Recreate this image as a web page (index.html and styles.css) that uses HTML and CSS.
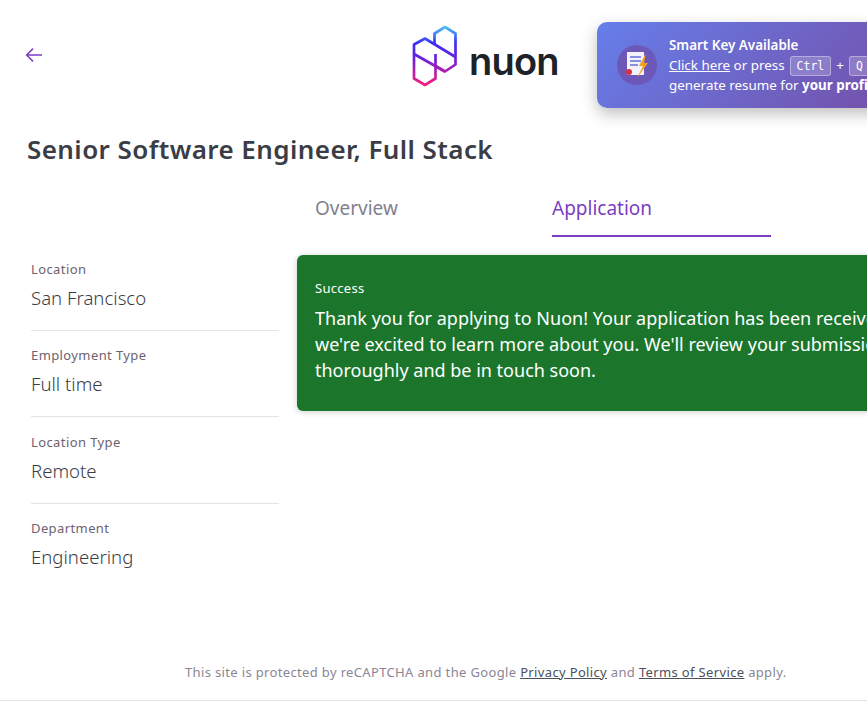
FILE: index.html
```html
<!DOCTYPE html>
<html lang="en">
<head>
<meta charset="utf-8">
<title>Senior Software Engineer, Full Stack</title>
<link rel="stylesheet" href="styles.css">
</head>
<body>
<div class="page">
  <header class="topbar">
    <a class="back" aria-label="Back">
      <svg width="18" height="18" viewBox="0 0 18 18" fill="none" stroke="#7b3fc4" stroke-width="1.5"><path d="M17 9H1.6M8 2.6L1.6 9L8 15.4"/></svg>
    </a>
    <div class="logo">
      <svg width="54" height="70" viewBox="0 0 54 70" fill="none" stroke="url(#lg)" stroke-width="2.7" stroke-linejoin="round">
        <defs>
          <linearGradient id="lg" gradientUnits="userSpaceOnUse" x1="0" y1="6" x2="0" y2="65">
            <stop offset="0" stop-color="#4fc8f5"/>
            <stop offset="0.28" stop-color="#3a30f5"/>
            <stop offset="0.55" stop-color="#6a1fdc"/>
            <stop offset="1" stop-color="#f5207f"/>
          </linearGradient>
        </defs>
        <path d="M26.5 24V13.500L37 7L47.500 13.500V44.500L37 51.500L26.500 45.500"/>
        <path d="M47.500 37L17 18.500L6 24.500V58.500L17 65L27.500 58.500V34"/>
        <path d="M6 34L37 51.500"/>
      </svg>
      <span class="wordmark">nuon</span>
    </div>
  </header>

  <aside class="smart-key">
    <span class="smart-icon">
      <svg width="26" height="28" viewBox="0 0 26 28">
        <rect x="3" y="1" width="17" height="23" fill="#f3f2fb"/>
        <path d="M6 6H17M6 10H17M6 14H14" stroke="#6470d8" stroke-width="1.500"/>
        <circle cx="5" cy="21" r="3" fill="#d8303f"/>
        <path d="M22 2L15 15H19L13 27L24 12H20Z" fill="#f5a21b"/>
      </svg>
    </span>
    <div class="smart-text">
      <strong class="smart-title">Smart Key Available</strong>
      <p class="smart-line"><a class="smart-link">Click here</a> or press <kbd>Ctrl</kbd> + <kbd>Q</kbd> to</p>
      <p class="smart-line">generate resume for <b>your profile</b></p>
    </div>
  </aside>

  <h1 class="job-title">Senior Software Engineer, Full Stack</h1>

  <nav class="tabs">
    <a class="tab">Overview</a>
    <a class="tab tab-active">Application</a>
  </nav>

  <div class="columns">
    <dl class="meta">
      <div class="meta-row"><dt>Location</dt><dd>San Francisco</dd></div>
      <div class="meta-row"><dt>Employment Type</dt><dd>Full time</dd></div>
      <div class="meta-row"><dt>Location Type</dt><dd>Remote</dd></div>
      <div class="meta-row"><dt>Department</dt><dd>Engineering</dd></div>
    </dl>
    <section class="alert">
      <h2 class="alert-title">Success</h2>
      <p class="alert-body">Thank you for applying to Nuon! Your application has been received and<br>we're excited to learn more about you. We'll review your submission<br>thoroughly and be in touch soon.</p>
    </section>
  </div>

  <footer class="legal">
    This site is protected by reCAPTCHA and the Google <a>Privacy Policy</a> and <a>Terms of Service</a> apply.
  </footer>
</div>
</body>
</html>
```

FILE: styles.css
```css
* { box-sizing: border-box; }
html, body { margin: 0; padding: 0; background: #fff; }
body {
  width: 867px;
  height: 702px;
  overflow: hidden;
  font-family: "Noto Sans", "Open Sans", sans-serif;
  color: #3a3d46;
}
.page { position: relative; width: 867px; height: 701px; border-bottom: 1px solid #e4e4e4; }
.topbar { height: 110px; position: relative; display: flex; align-items: flex-start; padding: 46px 0 0 25px; }
.back { display: block; width: 18px; height: 18px; }
.logo { display: flex; align-items: center; margin: -26px 0 0 365px; height: 70px; }
.logo svg { display: block; }
.wordmark { font-family: Inter, sans-serif; font-weight: 600; font-size: 38px; line-height: 40px; letter-spacing: -0.8px; color: #1d2229; margin: 11px 0 0 7px; }

.smart-key {
  position: absolute; left: 597px; top: 22px; width: 340px; height: 86px;
  display: flex; align-items: center; padding-left: 20px;
  border-radius: 10px;
  background: linear-gradient(135deg, #667eea 0%, #764ba2 100%);
  box-shadow: 0 6px 16px rgba(0,0,0,.25);
  color: #fff;
}
.smart-icon { width: 40px; height: 40px; border-radius: 50%; background: #6c58b8; display: flex; align-items: center; justify-content: center; flex: none; }
.smart-text { margin-left: 12px; font-size: 13.4px; line-height: 20px; white-space: nowrap; }
.smart-title { display: block; font-weight: 600; height: 20px; }
.smart-line { margin: 0; height: 20px; }
.smart-link { text-decoration: underline; }
.smart-line b { font-weight: 700; }
kbd { display: inline-block; font-family: "DejaVu Sans Mono", monospace; font-size: 11.5px; line-height: 18px; padding: 0 6px; margin: 0 1.5px; border: 1px solid rgba(255,255,255,.35); border-radius: 3px; background: rgba(255,255,255,.2); }

.job-title { margin: 23px 0 0 27px; font-size: 26px; line-height: 32px; font-weight: 600; letter-spacing: 0.42px; color: #3a3d46; }

.tabs { display: flex; gap: 18px; margin: 23px 0 0 315px; height: 49px; }
.tab { width: 219px; font-size: 19px; line-height: 26px; padding-top: 7px; color: #7f8191; }
.tab-active { color: #7b3fc4; border-bottom: 2px solid #7b3fc4; }

.columns { display: flex; margin-top: 18px; align-items: flex-start; padding-left: 31px; }
.meta { margin: 0; width: 248px; flex: none; }
.meta-row { height: 76px; margin-bottom: 10.450px; padding-top: 5px; border-bottom: 1px solid #e4e4e4; }
.meta-row:last-child { border-bottom: 0; }
.meta dt { font-size: 13px; line-height: 18px; letter-spacing: 0.4px; color: #6d6270; }
.meta dd { margin: 8px 0 0; font-size: 18.6px; line-height: 24px; font-weight: 300; color: #3a3d46; }

.alert { margin-left: 18px; width: 700px; height: 156px; flex: none; padding: 24px 18px; background: #1b762c; border-radius: 6px; color: #fff; box-shadow: 0 1px 6px rgba(0,0,0,.2); }
.alert-title { margin: 0; font-size: 13px; line-height: 18px; font-weight: 400; letter-spacing: 0.3px; }
.alert-body { margin: 8px 0 0; font-size: 18px; line-height: 26px; white-space: nowrap; }

.legal { position: absolute; left: 0; right: 0; top: 662px; padding-left: 185px; font-size: 13px; line-height: 20px; letter-spacing: 0.35px; color: #8b8594; white-space: nowrap; }
.legal a { color: #4c4f5c; text-decoration: underline; }
```
